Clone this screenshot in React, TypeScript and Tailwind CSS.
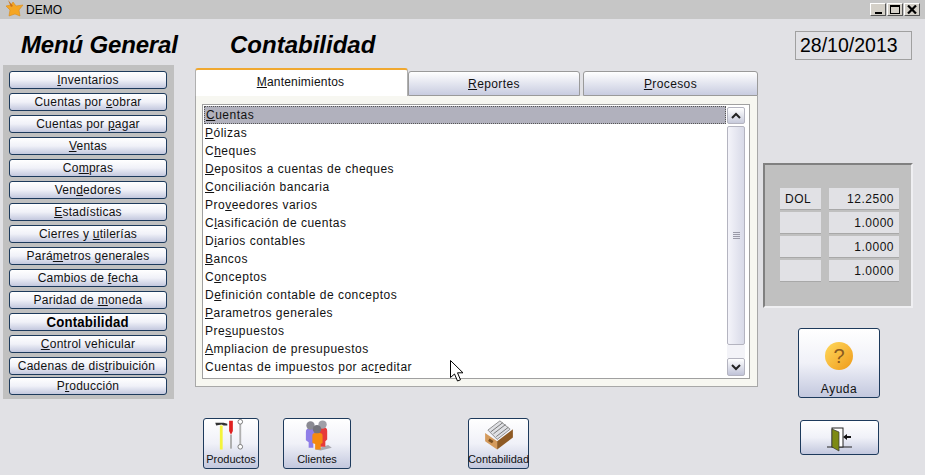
const menu: [string, string, string][] = [
  ["", "I", "nventarios"],
  ["Cuentas por ", "c", "obrar"],
  ["Cuentas por ", "p", "agar"],
  ["", "V", "entas"],
  ["Co", "m", "pras"],
  ["Ven", "d", "edores"],
  ["", "E", "stadísticas"],
  ["Cierres y ", "u", "tilerías"],
  ["Pará", "m", "etros generales"],
  ["Cambios de ", "f", "echa"],
  ["Paridad de ", "m", "oneda"],
];

const items: [string, string, string][] = [
  ["", "C", "uentas"],
  ["", "P", "ólizas"],
  ["C", "h", "eques"],
  ["", "D", "epositos a cuentas de cheques"],
  ["", "C", "onciliación bancaria"],
  ["Pro", "v", "eedores varios"],
  ["C", "l", "asificación de cuentas"],
  ["D", "i", "arios contables"],
  ["", "B", "ancos"],
  ["C", "o", "nceptos"],
  ["D", "e", "finición contable de conceptos"],
  ["", "P", "arametros generales"],
  ["Pre", "s", "upuestos"],
  ["", "A", "mpliacion de presupuestos"],
  ["Cuentas de impuestos por ac", "r", "editar"],
];

const Label = ({ t }: { t: [string, string, string] }) => (
  <span>
    {t[0]}
    <span className="underline">{t[1]}</span>
    {t[2]}
  </span>
);

const btn =
  "flex rounded-[3px] border border-[#1d3a5c] bg-gradient-to-b from-white via-[#f0f1f8] to-[#c3c8de] text-[#111]";

const side = `${btn} h-[18px] w-[158px] items-center justify-center tracking-[0.25px]`;

const WinButton = ({ children }: { children: React.ReactNode }) => (
  <div className="flex h-[13px] w-[16px] items-center justify-center border border-t-white border-l-white border-r-[#555] border-b-[#555] bg-[#d4d0c8]">
    {children}
  </div>
);

const App = () => {
  return (
    <div className="relative flex h-[475px] w-[925px] flex-col overflow-hidden bg-[#e1e1e5] font-['Liberation_Sans',sans-serif] text-[12px] tracking-[0.5px] text-[#111]">
      {/* Title bar */}
      <div className="flex h-[19px] items-center justify-between bg-[#c6c6c6] pl-[5px] pr-[5px]">
        <div className="flex items-center gap-[1px]">
          <svg width="20" height="19" viewBox="0 0 20 19">
            <path d="M8 2l3 4 7-1-4 5 1 6-5-2-6 2 1-6-4-4 5-1z" fill="#f5a623" stroke="#d98a18" strokeWidth="0.6" />
            <path d="M3 0l5 6-2 1z" fill="#c9701a" />
          </svg>
          <span className="text-[12px] tracking-normal text-black">DEMO</span>
        </div>
        <div className="flex gap-[1px]">
          <WinButton>
            <div className="mt-[7px] h-[2px] w-[7px] bg-black" />
          </WinButton>
          <WinButton>
            <div className="h-[9px] w-[10px] border border-t-2 border-black" />
          </WinButton>
          <WinButton>
            <svg width="10" height="9" viewBox="0 0 10 9">
              <path d="M1 0.5l8 8M9 0.5l-8 8" stroke="#000" strokeWidth="2.2" />
            </svg>
          </WinButton>
        </div>
      </div>

      {/* Header */}
      <div className="flex h-[46px] items-center pl-[21px] pr-[13px]">
        <h1 className="mt-[6px] w-[209px] text-[24px] font-bold italic tracking-[-0.17px] text-black">Menú General</h1>
        <h2 className="mt-[6px] flex-1 text-[24px] font-bold italic tracking-normal text-black">Contabilidad</h2>
        <div className="mt-[7px] flex h-[29px] w-[117px] items-center border border-[#a0a0a0] pl-[4px] text-[19.5px] tracking-normal text-black">
          28/10/2013
        </div>
      </div>

      <div className="flex flex-1">
        {/* Sidebar */}
        <div className="ml-[3px] flex h-[334px] w-[171px] flex-col gap-[4px] bg-[#c0c0c0] pl-[6px] pt-[6px]">
          {menu.map((m) => (
            <div key={m[2]} className={side}>
              <Label t={m} />
            </div>
          ))}
          <div className={`${side} text-[15px] font-bold text-black`}>
            <span className="scale-x-[0.88] tracking-[0.2px]">Contabilidad</span>
          </div>
          <div className={side}>
            <Label t={["", "C", "ontrol vehicular"]} />
          </div>
          <div className={`${side} pr-[3px]`}>
            <Label t={["Cadenas de dis", "t", "ribuición"]} />
          </div>
          <div className={`${side} -mt-[2px]`}>
            <Label t={["P", "r", "oducción"]} />
          </div>
        </div>

        {/* Center */}
        <div className="ml-[21px] flex w-[563px] flex-col">
          <div className="flex h-[31px] items-end">
            <div className="flex h-[28px] w-[213px] justify-center rounded-t-[3px] border-x border-[#b0b0b0] border-t-2 border-t-[#f0a830] bg-white pr-[2px] pt-[3px] tracking-[0.2px]">
              <Label t={["", "M", "antenimientos"]} />
            </div>
            <div className="flex h-[25px] w-[172px] items-center justify-center rounded-t-[3px] border border-[#9a9a9a] bg-gradient-to-b from-white to-[#c8cce0] tracking-[0.4px]">
              <Label t={["", "R", "eportes"]} />
            </div>
            <div className="ml-[3px] flex h-[25px] w-[175px] items-center justify-center rounded-t-[3px] border border-[#9a9a9a] bg-gradient-to-b from-white to-[#c8cce0] tracking-[0.4px]">
              <Label t={["", "P", "rocesos"]} />
            </div>
          </div>

          <div className="h-[291px] border border-t-0 border-[#a8a8a8] bg-[#f7f7f1] pl-[6px] pr-[7px] pt-[8px]">
            <div className="flex h-[275px] border border-[#a0a0a0] bg-white">
              <div className="flex-1 pl-[1px] pt-[1px]">
                {items.map((it, i) => (
                  <div
                    key={it[2]}
                    className={`flex h-[18px] items-center pl-[1px] ${i === 0 ? "border border-dotted border-[#555] bg-[#b1b1bd]" : ""}`}
                  >
                    <Label t={it} />
                  </div>
                ))}
              </div>

              {/* Scrollbar */}
              <div className="ml-[1px] mr-[4px] flex w-[18px] flex-col pt-[2px]">
                <div className="flex h-[17px] items-center justify-center rounded-[2px] border border-[#b4b4c0] bg-gradient-to-b from-white to-[#c8cbdc]">
                  <svg width="10" height="7" viewBox="0 0 10 7">
                    <path d="M1 6l4-4 4 4" fill="none" stroke="#222" strokeWidth="2" />
                  </svg>
                </div>
                <div className="mt-[2px] flex h-[219px] items-center justify-center rounded-[2px] border border-[#b4b4c0] bg-gradient-to-r from-[#f4f4fa] to-[#d8dae8]">
                  <div className="flex flex-col gap-[1px]">
                    <div className="h-px w-[7px] bg-[#9a9aa8]" />
                    <div className="h-px w-[7px] bg-[#9a9aa8]" />
                    <div className="h-px w-[7px] bg-[#9a9aa8]" />
                    <div className="h-px w-[7px] bg-[#9a9aa8]" />
                  </div>
                </div>
                <div className="h-[13px] bg-[#f3f3f8]" />
                <div className="flex h-[18px] items-center justify-center rounded-[2px] border border-[#b4b4c0] bg-gradient-to-b from-white to-[#c0c3d8]">
                  <svg width="10" height="7" viewBox="0 0 10 7">
                    <path d="M1 1l4 4 4-4" fill="none" stroke="#222" strokeWidth="2" />
                  </svg>
                </div>
              </div>
            </div>
          </div>

          {/* Bottom buttons */}
          <div className="mt-[31px] flex items-start pl-[8px] text-[11px] tracking-normal">
            <div className={`${btn} h-[51px] w-[56px] flex-col items-center justify-end pb-[1px]`}>
              <svg width="36" height="34" viewBox="0 0 36 34">
                <rect x="6" y="7" width="3" height="26" fill="#f4f43c" />
                <path d="M1 4h9l4 1v2H10l-2-1-6 1z" fill="#333" />
                <rect x="17" y="17" width="2" height="15" fill="#aaa" />
                <path d="M16 2h4v11l-2 4-2-4z" fill="#e02020" />
                <rect x="27" y="5" width="2" height="24" fill="#b0b0b0" />
                <circle cx="28" cy="3" r="2.5" fill="#fff" stroke="#777" />
                <circle cx="28" cy="30" r="2.5" fill="#fff" stroke="#777" />
              </svg>
              <span>Productos</span>
            </div>
            <div className={`${btn} ml-[24px] h-[51px] w-[68px] flex-col items-center justify-end pb-[1px]`}>
              <svg width="40" height="34" viewBox="0 0 40 34">
                <path d="M18 33l14-5 4 3-12 3z" fill="#a8a8b0" />
                <path d="M8 14q0-4 4-4h2q4 0 4 4v9l-2 2v6h-5v-6l-3-2z" fill="#8f7ee8" />
                <circle cx="13" cy="7" r="4.5" fill="#8a8a92" />
                <path d="M21 13q0-4 4-4h2q4 0 4 4v9l-2 2v6h-7z" fill="#e63a3a" />
                <circle cx="26" cy="6" r="4.5" fill="#a0a0a8" />
                <path d="M15 18q0-3 3-3h5q3 0 3 3v8l-2 1v6h-6v-6l-3-1z" fill="#f58a10" />
                <circle cx="20" cy="11" r="4.5" fill="#74747c" />
              </svg>
              <span>Clientes</span>
            </div>
            <div className={`${btn} ml-[117px] h-[51px] w-[61px] flex-col items-center justify-end pb-[1px]`}>
              <svg width="36" height="34" viewBox="0 0 36 34">
                <path d="M3 15l13 9v9L3 24z" fill="#d49a5c" />
                <path d="M16 24l17-13v9L16 33z" fill="#8e5a24" />
                <path d="M6 12L19 2l11 9-14 11z" fill="#dfe0e4" stroke="#707070" strokeWidth="0.8" />
                <path d="M9 14L22 4M12 16L25 6M15 19L28 9" stroke="#707070" strokeWidth="1" />
                <rect x="7" y="22" width="5" height="3" fill="#7a4f20" transform="rotate(32 9 23)" />
              </svg>
              <span>Contabilidad</span>
            </div>
          </div>
        </div>

        {/* Right column */}
        <div className="ml-[5px] flex w-[150px] flex-col">
          <div className="mt-[98px] h-[145px] border-2 border-[#efeff2] border-l-[#808080] border-t-[#808080] bg-[#c0c0c0] pl-[15px] pt-[23px]">
            <div className="grid grid-cols-[41px_70px] gap-x-[8px] gap-y-[2px]">
              {[
                ["DOL", "12.2500"],
                ["", "1.0000"],
                ["", "1.0000"],
                ["", "1.0000"],
              ].map((r, i) => (
                <div key={i} className="contents">
                  <div className="flex h-[22px] items-center border-b border-[#a8a8a8] bg-[#e1e1e5] pl-[5px]">{r[0]}</div>
                  <div className="flex h-[22px] items-center justify-end border-b border-[#a8a8a8] bg-[#e1e1e5] pr-[5px]">{r[1]}</div>
                </div>
              ))}
            </div>
          </div>
          <div className={`${btn} ml-[35px] mt-[20px] h-[70px] w-[82px] flex-col items-center justify-between pb-[1px] pt-[13px] leading-[14px]`}>
            <div className="flex h-[28px] w-[28px] items-center justify-center rounded-full bg-gradient-to-br from-[#ffd95a] to-[#ee9a10] text-[20px] leading-none tracking-normal text-[#8a5a20]">
              ?
            </div>
            <span>Ayuda</span>
          </div>
          <div className={`${btn} ml-[37px] mt-[22px] h-[35px] w-[79px] items-center justify-center`}>
            <svg width="28" height="28" viewBox="0 0 28 28">
              <path d="M1 23h25" stroke="#222" strokeWidth="1" />
              <rect x="6" y="4" width="11" height="19" fill="#fff" stroke="#222" />
              <path d="M6 5l7 3v19l-7-4z" fill="#7d8a14" stroke="#333" strokeWidth="0.7" />
              <path d="M25 12h-4v-2l-4 3 4 3v-2h4z" fill="#111" />
            </svg>
          </div>
        </div>
      </div>

      {/* Mouse pointer */}
      <svg className="absolute left-[450px] top-[360px]" width="14" height="24" viewBox="0 0 14 24">
        <path d="M0.5 0.5v17l4-3.5 3 7 3-1.2-3-7h5.5z" fill="#fff" stroke="#000" />
      </svg>
    </div>
  );
};

export default App;
